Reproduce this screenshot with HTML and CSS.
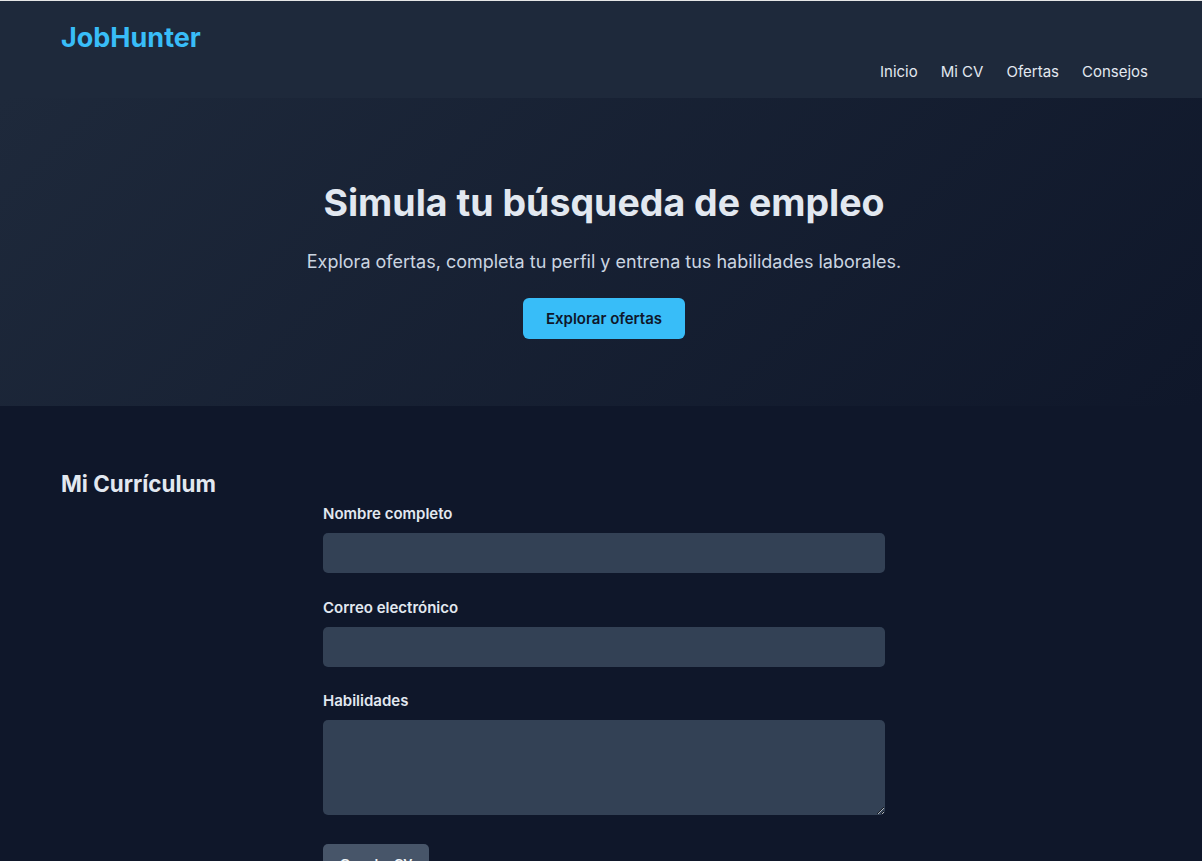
FILE: index.html
```html
<!DOCTYPE html>
<html lang="es">
<head>
<meta charset="utf-8">
<title>JobHunter</title>
<link rel="stylesheet" href="styles.css">
</head>
<body>
<header class="topbar">
  <div class="logo">JobHunter</div>
  <nav class="nav">
    <a href="#">Inicio</a>
    <a href="#">Mi CV</a>
    <a href="#">Ofertas</a>
    <a href="#">Consejos</a>
  </nav>
</header>
<section class="hero">
  <h1 class="hero-title">Simula tu búsqueda de empleo</h1>
  <p class="hero-sub">Explora ofertas, completa tu perfil y entrena tus habilidades laborales.</p>
  <a class="hero-btn" href="#">Explorar ofertas</a>
</section>
<section class="cv">
  <h2 class="cv-title">Mi Currículum</h2>
  <form class="cv-form">
    <label class="field-label">Nombre completo</label>
    <input class="field-input" type="text">
    <label class="field-label">Correo electrónico</label>
    <input class="field-input" type="email">
    <label class="field-label">Habilidades</label>
    <textarea class="field-area"></textarea>
    <button class="save-btn" type="button">Guardar CV</button>
  </form>
</section>
</body>
</html>
```
FILE: styles.css
```css
* { box-sizing: border-box; }
html, body { margin: 0; padding: 0; }
body {
  background: #0f172a;
  font-family: Inter, "Noto Sans", sans-serif;
  color: #e2e8f0;
  border-top: 1px solid #e6e6e6;
}
.topbar {
  display: flex;
  justify-content: space-between;
  height: 97px;
  padding: 0 54px 0 61px;
  background: #1e293b;
}
.logo {
  margin-top: 20px;
  font-size: 27px;
  line-height: 34px;
  font-weight: 700;
  color: #38bdf8;
  align-self: flex-start;
}
.nav {
  align-self: flex-end;
  display: flex;
  gap: 23px;
  padding-bottom: 16px;
}
.nav a {
  color: #e2e8f0;
  text-decoration: none;
  font-size: 15px;
  line-height: 20px;
}
.hero {
  height: 308px;
  padding-top: 83px;
  padding-left: 6px;
  text-align: center;
  background: linear-gradient(135deg, #1e293b 0%, #0f172a 100%);
}
.hero-title {
  margin: 0;
  font-size: 37.5px;
  line-height: 44px;
  font-weight: 700;
  color: #e2e8f0;
}
.hero-sub {
  margin: 23px 0 0;
  font-size: 18px;
  line-height: 28px;
  color: #cbd5e1;
}
.hero-btn {
  display: inline-block;
  margin-top: 22px;
  width: 162px;
  height: 41px;
  line-height: 41px;
  border-radius: 6px;
  background: #38bdf8;
  color: #0f172a;
  font-size: 15px;
  font-weight: 600;
  text-decoration: none;
}
.cv {
  padding: 64px 61px 40px;
}
.cv-title {
  margin: 0;
  font-size: 22.4px;
  line-height: 28px;
  font-weight: 700;
  color: #e2e8f0;
}
.cv-form {
  display: flex;
  flex-direction: column;
  width: 562px;
  margin: 6px 0 0 262px;
}
.field-label {
  font-size: 15px;
  line-height: 20px;
  font-weight: 600;
  color: #e2e8f0;
  margin-bottom: 9px;
}
.field-input, .field-area {
  display: block;
  width: 100%;
  border: none;
  border-radius: 5px;
  background: #334155;
  color: #e2e8f0;
  font-family: inherit;
  font-size: 15px;
  padding: 10px;
}
.field-input {
  height: 40px;
  margin-bottom: 24px;
}
.field-input:first-of-type { margin-bottom: 25px; }
.field-area {
  height: 95px;
  margin-bottom: 29px;
  resize: vertical;
}
.save-btn {
  align-self: flex-start;
  width: 106px;
  height: 38px;
  border: none;
  border-radius: 5px;
  background: #475569;
  color: #f1f5f9;
  font-family: "Liberation Sans", Arial, sans-serif;
  font-size: 13px;
  font-weight: 700;
}
```
